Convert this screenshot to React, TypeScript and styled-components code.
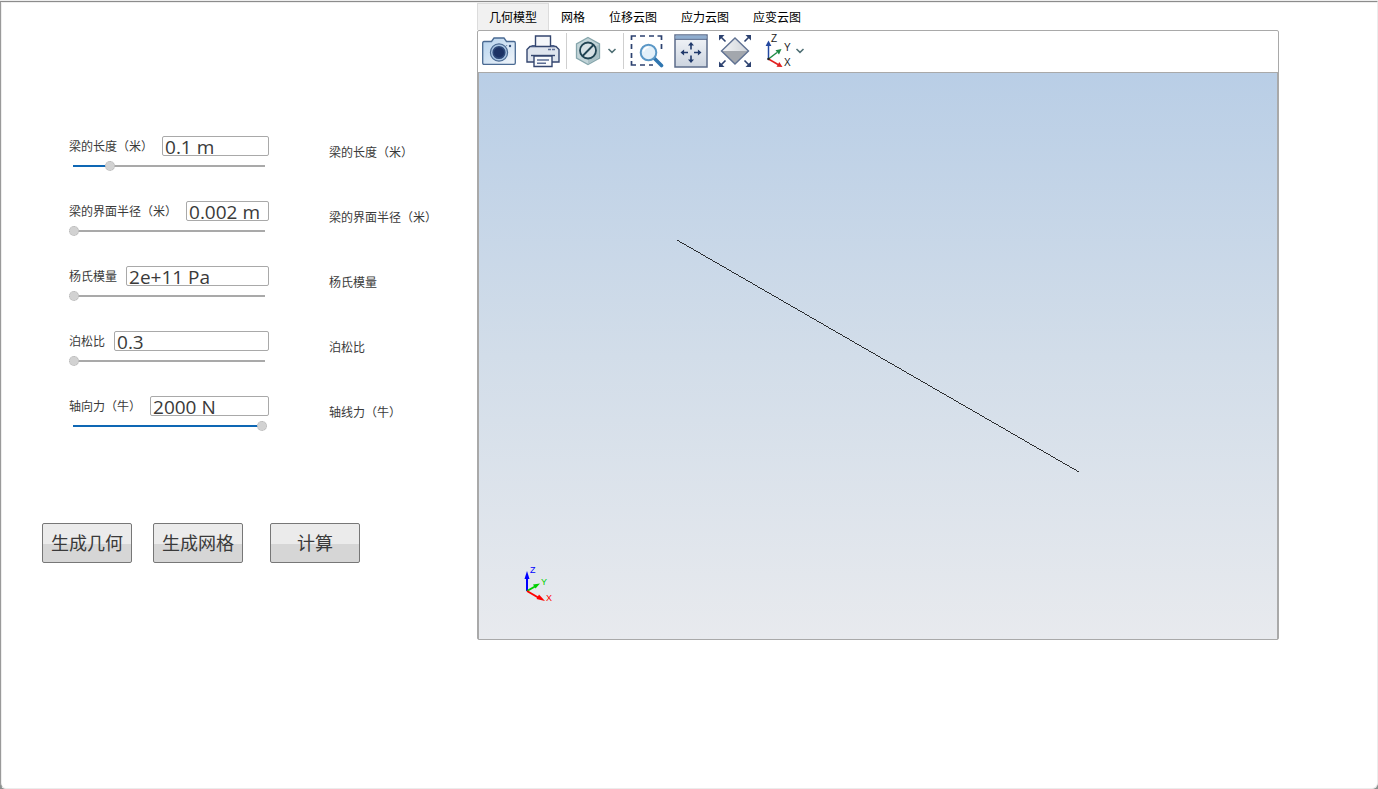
import React, { useId, useState } from "react";
import styled, { createGlobalStyle } from "styled-components";

const GlobalStyle = createGlobalStyle`
  * { box-sizing: border-box; }
  html, body, #root { min-height: 100vh; }
  body {
    margin: 0;
    background: #8a908e;
    font-family: "Open Sans", "Noto Sans CJK SC", sans-serif;
    font-size: 12px;
    line-height: 16px;
    color: #3a3a3a;
  }
  button, input { font-family: inherit; }
`;

const Frame = styled.div`
  min-height: 100vh;
  padding-top: 1px;
  background: linear-gradient(#eeeeee 50%, #8a908e 50%);
`;

const Window = styled.main`
  display: flex;
  align-items: flex-start;
  min-height: calc(100vh - 1px);
  background: #ffffff;
  border-top: 1px solid #8c8c8c;
  border-left: 1px solid #9a9a9a;
  border-right: 1px solid #ececec;
  border-bottom: 1px solid #ececec;
  border-bottom-left-radius: 6px;
  border-bottom-right-radius: 6px;
  box-shadow: inset 1px 1px 0 #eeeeee;
  padding-right: 98px;
`;

const Controls = styled.section`
  flex: 0 0 476px;
  padding: 134px 0 0 41px;
`;

const Fields = styled.form`
  display: flex;
  flex-direction: column;
  gap: 30px;
  padding-left: 27px;
`;

const FieldRow = styled.div`
  display: flex;
  gap: 60px;
`;

const Field = styled.div`
  width: 200px;
  display: flex;
  flex-direction: column;
  gap: 5px;
`;

const FieldHead = styled.div`
  display: flex;
  align-items: center;
  gap: 9px;
  height: 20px;
`;

const Label = styled.label`
  flex: none;
  padding-top: 2px;
  white-space: nowrap;
`;

const ValueBox = styled.input`
  flex: 1;
  min-width: 0;
  height: 20px;
  padding: 2px 2px 0;
  border: 1px solid #a9a9a9;
  border-radius: 2px;
  background: #ffffff;
  color: #3a3a3a;
  font-size: 19px;
  line-height: 18px;
  outline: none;
`;

const Range = styled.input<{ $fill: number }>`
  appearance: none;
  width: 198px;
  height: 10px;
  margin: 0;
  background:
    linear-gradient(#0e67b4, #0e67b4) 4px 4px / calc((100% - 10px) * ${(p) => p.$fill}) 2px no-repeat,
    linear-gradient(#a9a9a9, #a9a9a9) 4px 4px / calc(100% - 6px) 2px no-repeat;
  &::-webkit-slider-thumb {
    appearance: none;
    width: 10px;
    height: 10px;
    border: 1px dotted #b4b4b4;
    border-radius: 50%;
    background: #d2d2d2;
  }
`;

const Caption = styled.span`
  margin-top: 9px;
  white-space: nowrap;
`;

const Actions = styled.div`
  display: flex;
  gap: 21px;
  margin-top: 92px;
`;

const ActionButton = styled.button<{ $apart?: boolean }>`
  width: 90px;
  height: 40px;
  margin-left: ${(p) => (p.$apart ? "6px" : "0")};
  padding: 0;
  border: 1px solid #777777;
  border-radius: 2px;
  background: linear-gradient(#ebebeb 52%, #d6d6d6 52%);
  color: #3a3a3a;
  font-size: 18px;
  line-height: 24px;
  white-space: nowrap;
`;

const Viewer = styled.section`
  flex: 1;
  min-width: 0;
  padding-top: 1px;
`;

const Tabs = styled.nav`
  display: flex;
`;

const Tab = styled.button<{ $active?: boolean }>`
  height: 27px;
  padding: 2px 11px 0;
  border: 1px solid ${(p) => (p.$active ? "#dcdcdc" : "transparent")};
  border-bottom: 0;
  background: ${(p) => (p.$active ? "#f1f1f1" : "transparent")};
  color: #000000;
  font-size: 12px;
  line-height: 16px;
`;

const Panel = styled.div`
  border: 1px solid #a9a9a9;
  border-radius: 2px;
`;

const Toolbar = styled.div`
  display: flex;
  align-items: center;
  height: 42px;
  padding: 0 3px 2px;
  border-bottom: 1px solid #a9a9a9;
`;

const Tool = styled.button`
  display: flex;
  align-items: center;
  justify-content: center;
  gap: 4px;
  height: 36px;
  padding: 0 1px;
  margin-right: 8px;
  border: 0;
  background: transparent;
  svg { display: block; flex: none; }
`;

const ToolGroup = styled.div<{ $ruled?: boolean }>`
  display: flex;
  border-right: ${(p) => (p.$ruled ? "1px solid #cfcfcf" : "0")};
  margin-right: 5px;
  ${Tool}:last-child { margin-right: ${(p) => (p.$ruled ? "5px" : "0")}; }
`;

const Scene = styled.svg`
  display: block;
  width: 100%;
  height: auto;
  border: 1px solid #a9a9a9;
  border-width: 0 1px;
`;

const Chevron = () => (
  <svg width="10" height="8" viewBox="0 0 10 8">
    <path d="M1.5 2 L5 5.4 L8.5 2" fill="none" stroke="#4f6f74" strokeWidth="1.5" />
  </svg>
);

const CameraIcon = () => (
  <svg width="34" height="34" viewBox="0 0 34 34">
    <defs>
      <linearGradient id="cam" x1="0" y1="0" x2="1" y2="1">
        <stop offset="0" stopColor="#b4d2ee" />
        <stop offset="1" stopColor="#f2f6fa" />
      </linearGradient>
    </defs>
    <path
      d="M2 7.5 H9.5 L12 4 H22 L24.5 7.5 H32 Q33.3 7.5 33.3 9 V29 Q33.3 30.3 32 30.3 H2 Q.7 30.3 .7 29 V9 Q.7 7.5 2 7.5Z"
      fill="url(#cam)" stroke="#4a6a92" strokeWidth="1.3"
    />
    <circle cx="17" cy="18.5" r="8.6" fill="#a9c4e2" stroke="#4a6a92" strokeWidth="1.2" />
    <circle cx="17" cy="18.5" r="5.8" fill="#1c3264" stroke="#2c4878" strokeWidth="1.6" />
    <circle cx="28" cy="12" r="1.2" fill="#34507c" />
    <circle cx="24.6" cy="11.6" r=".7" fill="#6c86ac" />
  </svg>
);

const PrinterIcon = () => (
  <svg width="34" height="34" viewBox="0 0 34 34">
    <g stroke="#34466f" strokeWidth="1.4">
      <path d="M9.5 13 V2 H24.5 V13Z" fill="#f4f6fa" />
      <path d="M4 12.5 H30 L33 15.5 V28 H1 V15.5Z" fill="#dfe5ee" />
      <path d="M5 21.5 H29" />
      <path d="M8 22 H26 V32.5 H8Z" fill="#f8fafc" />
    </g>
    <path d="M5.5 11 H9 V13 H5.5Z M25 11 H28.5 V13 H25Z" fill="#4c5f88" />
    <path d="M11 26 H23 M11 29.2 H20" stroke="#5b6d94" strokeWidth="1.4" />
    <path d="M22 15.5 H29" stroke="#5b6d94" strokeWidth="1.4" strokeDasharray="3 1" />
  </svg>
);

const HiddenIcon = () => (
  <svg width="30" height="30" viewBox="-1 0 30 30">
    <path d="M14 1.5 L25.5 8 V22 L14 28.5 L2.5 22 V8Z" fill="#c3d5d9" stroke="#86a6ac" strokeWidth="1.3" />
    <path d="M14 15 L25 8.5 V21.5 L14 28Z" fill="#a9c1c6" />
    <circle cx="14" cy="14.5" r="8" fill="#d6e1e5" stroke="#1f4352" strokeWidth="1.8" />
    <path d="M8.6 20 L19.4 9" stroke="#1f4352" strokeWidth="1.8" />
  </svg>
);

const ZoomAreaIcon = () => (
  <svg width="34" height="34" viewBox="0 0 34 34">
    <path
      d="M1.5 6 V2 H6 M10 2 H15 M19 2 H24 M27.5 2 H31.5 V6 M31.5 10 V15 M1.5 10 V15 M1.5 19 V24 M1.5 27 V31 H6 M10 31 H15 M19 31 H23"
      fill="none" stroke="#2d4270" strokeWidth="1.7"
    />
    <path d="M24.5 24.5 L31.5 31.5" stroke="#2f76b0" strokeWidth="3.6" strokeLinecap="round" />
    <circle cx="18.5" cy="18.5" r="7.8" fill="#e3f0f9" stroke="#5a97c6" strokeWidth="2" />
    <path d="M13.5 17.5 Q14.5 13.5 18.5 13.3" fill="none" stroke="#ffffff" strokeWidth="1.6" />
  </svg>
);

const FitIcon = () => (
  <svg width="34" height="34" viewBox="0 0 34 34">
    <defs>
      <linearGradient id="fit" x1="0" y1="0" x2="0" y2="1">
        <stop offset="0" stopColor="#f4f6f9" />
        <stop offset="1" stopColor="#ccd4df" />
      </linearGradient>
    </defs>
    <rect x="1" y="1" width="32" height="32" fill="url(#fit)" stroke="#5c6c8a" strokeWidth="1.5" />
    <rect x="1.5" y="1.5" width="31" height="3.4" fill="#8fadcf" />
    <path d="M1 5.3 H33" stroke="#4d6288" />
    <g fill="#213a6b">
      <path d="M17 8 L20 11.6 H17.8 V15.5 H16.2 V11.6 H14Z" />
      <path d="M17 29 L20 25.4 H17.8 V21.5 H16.2 V25.4 H14Z" />
      <path d="M6.5 18.5 L10.1 15.5 V17.7 H14 V19.3 H10.1 V21.5Z" />
      <path d="M27.5 18.5 L23.9 15.5 V17.7 H20 V19.3 H23.9 V21.5Z" />
    </g>
  </svg>
);

const ExtentsIcon = () => (
  <svg width="34" height="34" viewBox="0 0 34 34">
    <defs>
      <linearGradient id="facet" x1="0" y1="0" x2="1" y2="0">
        <stop offset="0" stopColor="#f3f4f6" />
        <stop offset="1" stopColor="#cfd3d8" />
      </linearGradient>
    </defs>
    <path d="M17 4 L30.5 17 H3.5Z" fill="url(#facet)" />
    <path d="M3.5 17 H30.5 L17 30Z" fill="#a3a7ad" />
    <path d="M17 4 L30.5 17 L17 30 L3.5 17Z" fill="none" stroke="#5f7192" strokeWidth="1.4" />
    <path d="M2 2 L7.5 7.5 M32 2 L26.5 7.5 M2 32 L7.5 26.5 M32 32 L26.5 26.5" stroke="#2d4270" strokeWidth="1.6" />
    <g fill="#2d4270">
      <path d="M1 1 H6.5 L1 6.5Z" />
      <path d="M33 1 H27.5 L33 6.5Z" />
      <path d="M1 33 H6.5 L1 27.5Z" />
      <path d="M33 33 H27.5 L33 27.5Z" />
    </g>
  </svg>
);

const AxesIcon = () => (
  <svg width="29" height="34" viewBox="-2 0 29 34" fontFamily="Liberation Sans, sans-serif" fontSize="10">
    <path d="M4.5 25 V10" stroke="#2348a0" strokeWidth="1.5" />
    <path d="M4.5 6.5 L7.4 12 H1.6Z" fill="#2348a0" />
    <path d="M4.5 25 L13 18.5" stroke="#1e8a45" strokeWidth="1.5" />
    <path d="M17.5 15 L15 20.5 L11.5 16.2Z" fill="#1e8a45" />
    <path d="M4.5 25 L14 30.5" stroke="#e22020" strokeWidth="1.5" />
    <path d="M18.5 33 L12.5 32.8 L15.3 28Z" fill="#e22020" />
    <circle cx="4.5" cy="25" r="1.3" fill="#222222" />
    <g fill="#222222">
      <text x="7" y="8">Z</text>
      <text x="20" y="17">Y</text>
      <text x="20" y="32">X</text>
    </g>
  </svg>
);

type Parameter = {
  label: string;
  caption: string;
  unit: string;
  value: number;
  min: number;
  max: number;
  step: number;
};

const PARAMETERS: Parameter[] = [
  { label: "梁的长度（米）", caption: "梁的长度（米）", unit: " m", value: 0.1, min: 0.01, max: 0.48, step: 0.01 },
  { label: "梁的界面半径（米）", caption: "梁的界面半径（米）", unit: " m", value: 0.002, min: 0.002, max: 0.01, step: 0.001 },
  { label: "杨氏模量", caption: "杨氏模量", unit: " Pa", value: 2e11, min: 2e11, max: 3e11, step: 1e9 },
  { label: "泊松比", caption: "泊松比", unit: "", value: 0.3, min: 0.3, max: 0.5, step: 0.01 },
  { label: "轴向力（牛）", caption: "轴线力（牛）", unit: " N", value: 2000, min: 100, max: 2000, step: 100 },
];

const format = (value: number, unit: string) =>
  (value >= 1e6 ? value.toExponential() : String(value)) + unit;

function ParameterRow({ parameter }: { parameter: Parameter }) {
  const id = useId();
  const { label, caption, unit, min, max, step } = parameter;
  const [value, setValue] = useState(parameter.value);
  return (
    <FieldRow>
      <Field>
        <FieldHead>
          <Label htmlFor={id}>{label}</Label>
          <ValueBox id={id} type="text" readOnly value={format(value, unit)} />
        </FieldHead>
        <Range
          type="range"
          aria-label={label}
          min={min}
          max={max}
          step={step}
          value={value}
          $fill={(value - min) / (max - min)}
          onChange={(e) => setValue(Number(e.target.value))}
        />
      </Field>
      <Caption>{caption}</Caption>
    </FieldRow>
  );
}

const TABS = ["几何模型", "网格", "位移云图", "应力云图", "应变云图"];

function BeamScene() {
  return (
    <Scene viewBox="0 0 798 566" role="img" aria-label="几何模型">
      <defs>
        <linearGradient id="sky" x1="0" y1="0" x2="0" y2="1">
          <stop offset="0" stopColor="#b9cee6" />
          <stop offset="0.5" stopColor="#d2dde9" />
          <stop offset="1" stopColor="#e8eaee" />
        </linearGradient>
      </defs>
      <rect width="798" height="566" fill="url(#sky)" />
      <path d="M198 167 L600 399" stroke="#000000" strokeWidth="0.8" shapeRendering="crispEdges" />
      <g strokeWidth="2">
        <path d="M48 518 V502" stroke="#0000ff" />
        <path d="M48 498 L50.5 506 H45.5Z" fill="#0000ff" />
        <path d="M48 518 L56 513.5" stroke="#00d000" />
        <path d="M61 510.5 L56.5 515.5 L54 511.5Z" fill="#00d000" />
        <path d="M48 518 L60 525" stroke="#ff0000" />
        <path d="M66 528 L57.5 526 L60 521.5Z" fill="#ff0000" />
      </g>
      <g fontFamily="Liberation Sans, sans-serif" fontSize="9">
        <text x="51" y="500" fill="#0000ff">Z</text>
        <text x="62" y="512" fill="#00d000">Y</text>
        <text x="67" y="528" fill="#ff0000">X</text>
      </g>
    </Scene>
  );
}

export default function App() {
  const [tab, setTab] = useState(0);
  return (
    <Frame>
      <GlobalStyle />
      <Window>
        <Controls>
          <Fields>
            {PARAMETERS.map((p) => (
              <ParameterRow key={p.label} parameter={p} />
            ))}
          </Fields>
          <Actions>
            <ActionButton type="button">生成几何</ActionButton>
            <ActionButton type="button">生成网格</ActionButton>
            <ActionButton type="button" $apart>计算</ActionButton>
          </Actions>
        </Controls>
        <Viewer>
          <Tabs>
            {TABS.map((name, i) => (
              <Tab key={name} type="button" $active={i === tab} onClick={() => setTab(i)}>
                {name}
              </Tab>
            ))}
          </Tabs>
          <Panel>
            <Toolbar>
              <ToolGroup $ruled>
                <Tool type="button" aria-label="截图"><CameraIcon /></Tool>
                <Tool type="button" aria-label="打印"><PrinterIcon /></Tool>
              </ToolGroup>
              <ToolGroup $ruled>
                <Tool type="button" aria-label="隐藏"><HiddenIcon /><Chevron /></Tool>
              </ToolGroup>
              <ToolGroup>
                <Tool type="button" aria-label="框选缩放"><ZoomAreaIcon /></Tool>
                <Tool type="button" aria-label="适合窗口"><FitIcon /></Tool>
                <Tool type="button" aria-label="缩放到范围"><ExtentsIcon /></Tool>
                <Tool type="button" aria-label="视图方向"><AxesIcon /><Chevron /></Tool>
              </ToolGroup>
            </Toolbar>
            <BeamScene />
          </Panel>
        </Viewer>
      </Window>
    </Frame>
  );
}
